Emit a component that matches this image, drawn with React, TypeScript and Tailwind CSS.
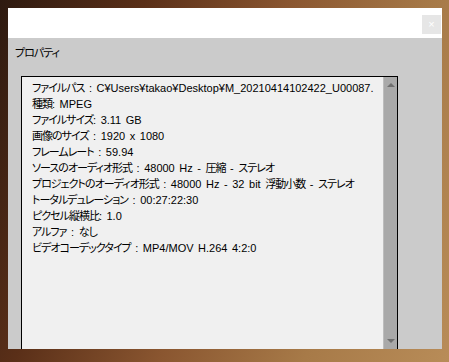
import React from "react";

const rows = [
  "ファイルパス : C¥Users¥takao¥Desktop¥M_20210414102422_U00087.",
  "種類: MPEG",
  "ファイルサイズ: 3.11 GB",
  "画像のサイズ : 1920 x 1080",
  "フレームレート : 59.94",
  "ソースのオーディオ形式 : 48000 Hz - 圧縮 - ステレオ",
  "プロジェクトのオーディオ形式 : 48000 Hz - 32 bit 浮動小数 - ステレオ",
  "トータルデュレーション : 00:27:22:30",
  "ピクセル縦横比: 1.0",
  "アルファ : なし",
  "ビデオコーデックタイプ : MP4/MOV H.264 4:2:0",
];

// kana/kanji runs are set a little tighter than the latin text
const Line = ({ text }: { text: string }) => {
  const parts = text.split(/([\u3040-\u30ff\u4e00-\u9fff]+)/);
  return (
    <div>
      {parts.map((p, i) =>
        i % 2 === 1 ? (
          <span key={i} className="tracking-[-1px]">{p}</span>
        ) : (
          <span key={i}>{p}</span>
        )
      )}
    </div>
  );
};

const App = () => {
  return (
    <div className="w-[449px] h-[362px] overflow-hidden bg-[linear-gradient(110deg,#2e1a10_0%,#5a2f18_25%,#8a5630_50%,#a77a48_75%,#b88c58_100%)] pt-[8px] pl-[8px] font-['Liberation_Sans','Noto_Sans_CJK_JP',sans-serif]">
      <div className="w-[434px] h-[341px] flex flex-col">
        {/* title bar */}
        <div className="h-[30px] bg-white flex justify-end items-start pt-[7px] pr-[1px]">
          <div className="w-[19px] h-[19px] bg-[#e6e6e6] flex items-center justify-center text-[11px] leading-none text-white">×</div>
        </div>

        {/* body */}
        <div className="flex-1 bg-[#cbcbcb] flex flex-col min-h-0">
          <div className="h-[38px] pl-[7px] pt-[7px] text-[11px] leading-[16px] text-black [font-feature-settings:'palt'] tracking-[-1px]">プロパティ</div>
          <div className="ml-[13px] w-[377px] flex-1 flex border-t border-l border-r border-black min-h-0">
            <div className="flex-1 bg-[#f0f0f0] pl-[10px] pt-[3px] text-[11px] leading-[16px] text-black [font-feature-settings:'palt'] [word-spacing:1.5px] whitespace-nowrap overflow-hidden">
              {rows.map((r, i) => (
                <Line key={i} text={r} />
              ))}
            </div>
            <div className="w-[14px] bg-[#a9a9a9] border-l border-[#bdbdbd] flex flex-col justify-between items-center py-[6px]">
              <div className="w-0 h-0 border-l-[4px] border-r-[4px] border-b-[4px] border-l-transparent border-r-transparent border-b-[#6f6f6f]" />
              <div className="w-0 h-0 border-l-[4px] border-r-[4px] border-t-[4px] border-l-transparent border-r-transparent border-t-[#6f6f6f]" />
            </div>
          </div>
        </div>
      </div>
    </div>
  );
};

export default App;
